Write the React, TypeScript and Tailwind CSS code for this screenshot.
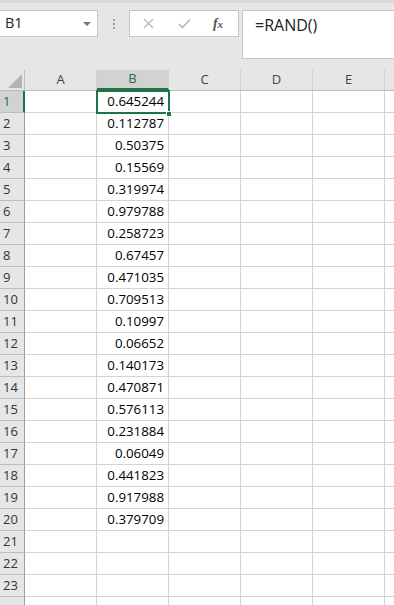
import React from "react";

const values = [
  "0.645244", "0.112787", "0.50375", "0.15569", "0.319974", "0.979788", "0.258723",
  "0.67457", "0.471035", "0.709513", "0.10997", "0.06652", "0.140173", "0.470871",
  "0.576113", "0.231884", "0.06049", "0.441823", "0.917988", "0.379709",
];

const cols = ["A", "B", "C", "D", "E", ""];

export default function App() {
  const rows = Array.from({ length: 24 }, (_, i) => i + 1);
  return (
    <div className="w-[394px] h-[605px] overflow-hidden bg-white font-['Open_Sans',sans-serif] text-black">
      {/* Toolbar */}
      <div className="h-[70px] bg-[#e6e6e6] border-t-[3px] border-[#d8d8d8] pt-[7px] flex items-start">
        <div className="w-[98px] shrink-0 h-[27px] bg-white border border-l-0 border-[#c6c6c6] flex items-center justify-between pl-[5px] pr-[6px]">
          <span className="text-[14.5px] text-[#222] leading-none">B1</span>
          <svg width="8" height="4" viewBox="0 0 8 4">
            <path d="M0 0 L8 0 L4 4 Z" fill="#777" />
          </svg>
        </div>
        <div className="ml-[15px] mt-[9px] flex flex-col gap-[2px] shrink-0">
          <div className="w-[2px] h-[2px] bg-[#a0a0a0]" />
          <div className="w-[2px] h-[2px] bg-[#a0a0a0]" />
          <div className="w-[2px] h-[2px] bg-[#a0a0a0]" />
        </div>
        <div className="ml-[14px] w-[110px] shrink-0 h-[27px] bg-white border border-[#c6c6c6] flex items-center">
          <div className="w-[37px] flex justify-center">
            <svg width="11" height="11" viewBox="0 0 11 11">
              <path d="M1 1 L10 10 M10 1 L1 10" stroke="#b8b8b8" strokeWidth="1.3" />
            </svg>
          </div>
          <div className="w-[34px] flex justify-center">
            <svg width="13" height="11" viewBox="0 0 13 11">
              <path d="M1 6 L4.5 9.5 L12 1.5" stroke="#b8b8b8" strokeWidth="1.6" fill="none" />
            </svg>
          </div>
          <div className="w-[34px] flex justify-center">
            <span className="font-['Liberation_Serif',serif] italic font-bold text-[14px] text-[#555] leading-none">
              f<span className="text-[11px]">x</span>
            </span>
          </div>
        </div>
        <div className="ml-[3px] w-[160px] shrink-0 h-[49px] bg-white border border-r-0 border-[#c6c6c6] pl-[12px] pt-[2px]">
          <span className="text-[16px] text-[#222] leading-none">=RAND()</span>
        </div>
      </div>

      {/* Grid */}
      <div className="relative">
        {/* Header row */}
        <div className="flex h-[21px] bg-[#e6e6e6] border-b border-[#bdbdbd]">
          <div className="w-[25px] shrink-0 relative border-r border-[#bdbdbd]">
            <svg className="absolute left-[8px] top-[4px]" width="14" height="14" viewBox="0 0 14 14">
              <path d="M14 0 L14 14 L0 14 Z" fill="#b4b4b4" />
            </svg>
          </div>
          {cols.map((c, i) => (
            <div
              key={i}
              className={
                "w-[72px] shrink-0 flex items-center justify-center text-[13px] border-r border-[#d0d0d0] " +
                (c === "B" ? "bg-[#d2d2d2] text-[#217346] border-b-2 border-b-[#217346]" : "text-[#444]")
              }
            >
              {c}
            </div>
          ))}
        </div>
        {rows.map((r) => (
          <div key={r} className="flex h-[22px]">
            <div
              className={
                "w-[25px] shrink-0 flex items-center pl-[3px] text-[13px] border-b border-[#bdbdbd] " +
                (r === 1
                  ? "bg-[#d2d2d2] text-[#217346] border-r-2 border-r-[#217346]"
                  : "bg-[#e6e6e6] text-[#333] border-r border-r-[#9e9e9e]")
              }
            >
              {r <= 23 ? r : ""}
            </div>
            {cols.map((c, i) => (
              <div
                key={i}
                className="w-[72px] shrink-0 border-r border-b border-[#d4d4d4] flex items-center justify-end pr-[4px] pt-[1px] text-[13.3px] leading-none"
              >
                {c === "B" && r <= 20 ? values[r - 1] : ""}
              </div>
            ))}
          </div>
        ))}
        {/* Selection overlay */}
        <div className="absolute left-[96px] top-[20px] w-[74px] h-[24px] border-2 border-[#217346] pointer-events-none" />
        <div className="absolute left-[166px] top-[41px] w-[6px] h-[6px] bg-[#217346] border border-white pointer-events-none" />
      </div>
    </div>
  );
}
